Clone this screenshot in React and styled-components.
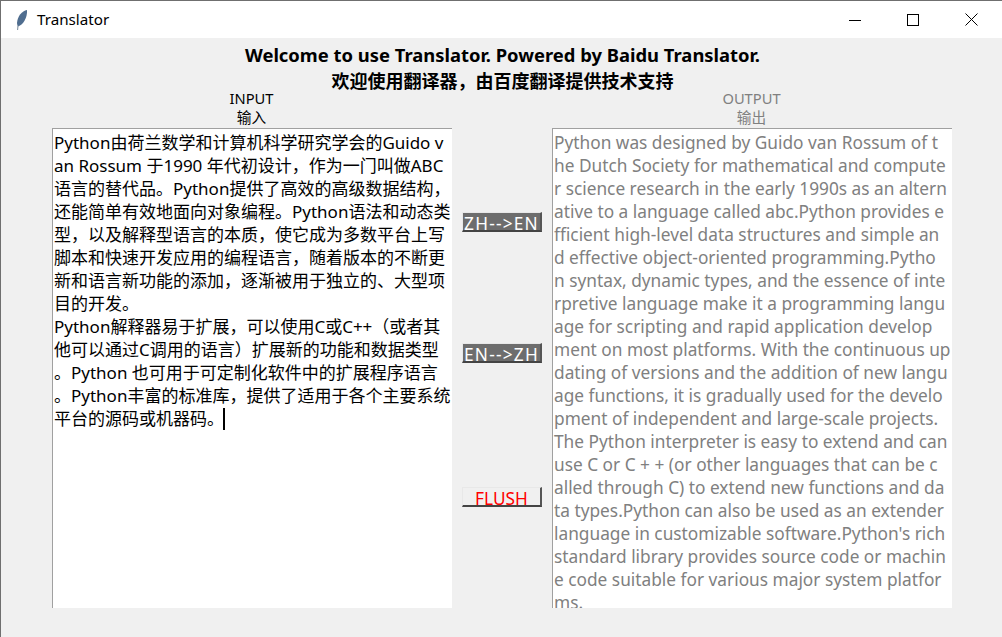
import React from "react";
import styled, { createGlobalStyle } from "styled-components";

const Global = createGlobalStyle`
  html, body { margin: 0; padding: 0; background: #f0f0f0; }
  #root { width: 1002px; height: 637px; overflow: hidden; }
`;
const FONT = `"Noto Sans", "Noto Sans CJK SC", sans-serif`;
const Win = styled.div`
  width: 1002px; height: 637px; box-sizing: border-box;
  border: 1px solid #6f6f6f; border-bottom: 0; border-right: 0;
  background: #f0f0f0; font-family: ${FONT}; color: #000;
  display: flex; flex-direction: column; overflow: hidden;
`;
const TitleBar = styled.div`
  height: 37px; flex: none; background: #fff; display: flex; align-items: center; padding-right: 2px;
`;
const Feather = styled.svg`
  width: 14px; height: 22px; margin-left: 14px; flex: none;
`;
const TitleText = styled.div`
  margin-left: 8px; padding-bottom: 2px; font-size: 15.2px; flex: 1; font-family: "Noto Sans", sans-serif;
`;
const WinBtn = styled.div`
  width: 58px; height: 37px; display: flex; align-items: center; justify-content: center;
`;
const Content = styled.div`
  flex: 1; display: flex; flex-direction: column; align-items: center; min-height: 0;
`;
const Heading = styled.div`
  font-weight: 700; font-size: ${p => p.$size}px; line-height: 26px; height: 26px; text-align: center;
  white-space: nowrap; margin-left: 2px;
  &:first-child { margin-top: 4px; }
`;
const Columns = styled.div`
  display: flex; width: 100%; padding-left: 51px; box-sizing: border-box; height: 520px; align-items: flex-start;
`;
const Column = styled.div`
  width: 400px; flex: none; display: flex; flex-direction: column;
`;
const Label = styled.div`
  height: 39px; display: flex; flex-direction: column; align-items: center;
  font-size: 14.7px; line-height: 19px; color: ${p => p.$c};
  margin-top: -5px;
  padding-right: 1px;
`;
const TextPanel = styled.div`
  width: 400px; height: 480px; background: #fff; box-sizing: border-box; overflow: hidden;
  border-left: 1px solid #a0a0a0; border-top: 1px solid #a0a0a0;
  padding: 2px 0 0 1px; color: ${p => p.$c}; font-size: ${p => p.$size}px; line-height: 23px;
`;
const Line = styled.div`
  white-space: nowrap; height: 23px;
`;
const Caret = styled.span`
  display: inline-block; width: 2px; height: 22px; background: #000; vertical-align: -5px; margin-left: -1px;
`;
const Middle = styled.div`
  width: 100px; flex: none; display: flex; flex-direction: column; align-items: center; padding-top: 118px;
`;
const Btn = styled.button`
  width: 80px; height: 20px; box-sizing: border-box; padding: 3px 0 0; margin: 0 0 ${p => p.$gap || 0}px;
  font-family: ${FONT}; font-size: 17.3px; line-height: 15px; cursor: default;
  letter-spacing: ${p => p.$flush ? 0 : 1.2}px;
  background: ${p => p.$flush ? "#f0f0f0" : "#6d6d6d"};
  color: ${p => p.$flush ? "#ff0000" : "#fff"};
  border: solid; border-color: #e8e8e8 #555 #444 #e8e8e8;
  border-width: 1px 2px 2px 1px;
  white-space: nowrap; overflow: visible;
`;

const input = [
  "Python由荷兰数学和计算机科学研究学会的Guido v",
  "an Rossum 于1990 年代初设计，作为一门叫做ABC",
  "语言的替代品。Python提供了高效的高级数据结构，",
  "还能简单有效地面向对象编程。Python语法和动态类",
  "型，以及解释型语言的本质，使它成为多数平台上写",
  "脚本和快速开发应用的编程语言，随着版本的不断更",
  "新和语言新功能的添加，逐渐被用于独立的、大型项",
  "目的开发。",
  "Python解释器易于扩展，可以使用C或C++（或者其",
  "他可以通过C调用的语言）扩展新的功能和数据类型",
  "。Python 也可用于可定制化软件中的扩展程序语言",
  "。Python丰富的标准库，提供了适用于各个主要系统",
];
const output = [
  "Python was designed by Guido van Rossum of t",
  "he Dutch Society for mathematical and compute",
  "r science research in the early 1990s as an altern",
  "ative to a language called abc.Python provides e",
  "fficient high-level data structures and simple an",
  "d effective object-oriented programming.Pytho",
  "n syntax, dynamic types, and the essence of inte",
  "rpretive language make it a programming langu",
  "age for scripting and rapid application develop",
  "ment on most platforms. With the continuous up",
  "dating of versions and the addition of new langu",
  "age functions, it is gradually used for the develo",
  "pment of independent and large-scale projects.",
  "The Python interpreter is easy to extend and can",
  "use C or C + + (or other languages that can be c",
  "alled through C) to extend new functions and da",
  "ta types.Python can also be used as an extender",
  "language in customizable software.Python's rich",
  "standard library provides source code or machin",
  "e code suitable for various major system platfor",
  "ms.",
];

export default function App() {
  return (
    <Win>
      <Global />
      <TitleBar>
        <Feather viewBox="0 0 14 22">
          <path d="M12 1C7 2 2.5 7 2 14c0 1.3.3 2.5 1 3.5C8.5 15.5 12.5 8.5 12 1z" fill="#4f6d8f" />
          <path d="M3 16.5L2.6 21" stroke="#7a8a9a" strokeWidth="1" fill="none" />
        </Feather>
        <TitleText>Translator</TitleText>
        <WinBtn>
          <svg width="12" height="12" viewBox="0 0 12 12"><path d="M0 6.5h12" stroke="#000" fill="none" /></svg>
        </WinBtn>
        <WinBtn>
          <svg width="12" height="12" viewBox="0 0 12 12"><rect x=".5" y=".5" width="11" height="11" stroke="#000" fill="none" /></svg>
        </WinBtn>
        <WinBtn>
          <svg width="13" height="13" viewBox="0 0 13 13"><path d="M.5.5l12 12M12.5.5l-12 12" stroke="#000" fill="none" /></svg>
        </WinBtn>
      </TitleBar>
      <Content>
        <Heading $size={18.4}>Welcome to use Translator. Powered by Baidu Translator.</Heading>
        <Heading $size={18}>欢迎使用翻译器，由百度翻译提供技术支持</Heading>
        <Columns>
          <Column>
            <Label $c="#000"><span>INPUT</span><span>输入</span></Label>
            <TextPanel $c="#000" $size={17}>
              {input.map((l, i) => <Line key={i}>{l}</Line>)}
              <Line>平台的源码或机器码。<Caret /></Line>
            </TextPanel>
          </Column>
          <Middle>
            <Btn $gap={111}>ZH--&gt;EN</Btn>
            <Btn $gap={124}>EN--&gt;ZH</Btn>
            <Btn $flush>FLUSH</Btn>
          </Middle>
          <Column>
            <Label $c="#808080"><span>OUTPUT</span><span>输出</span></Label>
            <TextPanel $c="#808080" $size={17.3}>
              {output.map((l, i) => <Line key={i}>{l}</Line>)}
            </TextPanel>
          </Column>
        </Columns>
      </Content>
    </Win>
  );
}
